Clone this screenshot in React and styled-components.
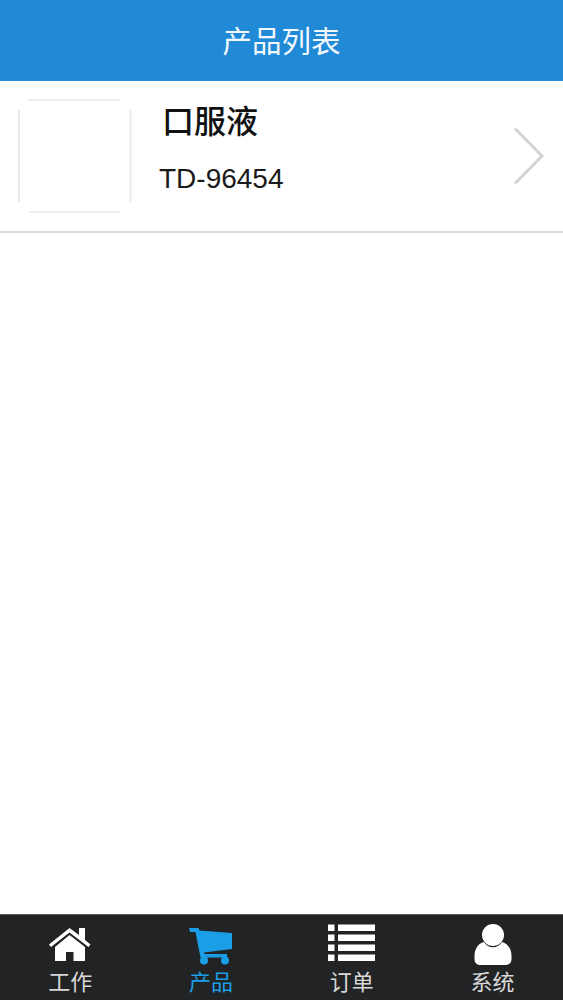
import React from 'react';
import styled, { createGlobalStyle } from 'styled-components';

const CJK = `"Liberation Sans", "Noto Sans CJK SC", sans-serif`;

const GlobalStyle = createGlobalStyle`
  html, body { margin: 0; padding: 0; background: #fff; }
  * { box-sizing: border-box; }
`;

// all tab icons share a 42px tall box, top edge at y=924 of the page
const HomeIcon = () => (
  <svg width="42" height="42" viewBox="0 -4 42 42">
    <path d="M20.5 0 L30 7 V0 H36 V12 L41.5 16.5 L39.5 19 L20.5 4.5 L2 19 L0 16.5 Z" fill="currentColor" />
    <path d="M20.5 7 L36 19 V33 H24.5 V24 H17 V33 H6 V19 Z" fill="currentColor" />
  </svg>
);

const CartIcon = () => (
  <svg width="44" height="42" viewBox="0 -4 44 42">
    <path d="M0 0 H9.5 L10.5 2.5 L43 5 V21 L15 24.5 L15.5 26 H38 V29.5 H11.5 L6.5 4 H1 Z" fill="currentColor" />
    <circle cx="15" cy="32.5" r="4" fill="currentColor" />
    <circle cx="36" cy="32.5" r="4" fill="currentColor" />
  </svg>
);

const ListIcon = () => (
  <svg width="47" height="42" viewBox="0 0 47 42">
    {[0, 10, 20, 30].map((y) => (
      <g key={y} fill="currentColor">
        <rect x="0" y={y + 0.5} width="6.5" height="6.5" />
        <rect x="10" y={y + 0.5} width="37" height="6.5" />
      </g>
    ))}
  </svg>
);

const UserIcon = () => (
  <svg width="38" height="42" viewBox="0 0 38 42">
    <circle cx="19" cy="11" r="11" fill="currentColor" />
    <path d="M10 18 C14 25 24 25 28 18 C34 19.5 37.5 25 37.5 32 V35 C37.5 39 35 41 31 41 H7 C3 41 0.5 39 0.5 35 V32 C0.5 25 4 19.5 10 18 Z" fill="currentColor" />
  </svg>
);

const ThumbFrame = () => (
  <svg width="114" height="114" viewBox="0 0 114 114">
    <g stroke="#e6e6e6" strokeWidth="1.6">
      <line x1="10" y1="1" x2="102" y2="1" />
      <line x1="11" y1="113" x2="102" y2="113" />
      <line x1="1" y1="11" x2="1" y2="103" />
      <line x1="112.5" y1="11" x2="112.5" y2="103" />
    </g>
  </svg>
);

const Chevron = () => (
  <svg width="32" height="58" viewBox="0 0 32 58">
    <path d="M2 1.5 L29 29 L2 56.5" fill="none" stroke="#d4d4d4" strokeWidth="3" />
  </svg>
);

const Page = styled.div`
  width: 563px;
  height: 1000px;
  display: flex;
  flex-direction: column;
  background: #fff;
  font-family: ${CJK};
  overflow: hidden;
`;

const Header = styled.header`
  height: 81px;
  flex: none;
  display: flex;
  align-items: center;
  justify-content: center;
  padding-bottom: 3px;
  background: #208ad6;
  color: #f2f8fd;
  font-size: 29.5px;
`;

const Content = styled.main`
  flex: 1;
`;

const ProductRow = styled.div`
  height: 152px;
  display: flex;
  align-items: center;
  padding: 0 18px;
  border-bottom: 2px solid #d9d9d9;
`;

const Thumb = styled.div`
  width: 114px;
  height: 114px;
  flex: none;
  display: flex;
`;

const Info = styled.div`
  flex: 1;
  display: flex;
  flex-direction: column;
  padding: 0 0 15px 27px;
`;

const Name = styled.div`
  font-size: 32px;
  font-weight: 500;
  line-height: 40px;
  color: #111;
  padding-left: 3px;
`;

const Code = styled.div`
  margin-top: 21px;
  font-size: 28px;
  line-height: 32px;
  color: #1a1a1a;
`;

const ChevronSlot = styled.div`
  flex: none;
  display: flex;
`;

const TabBar = styled.nav`
  height: 86px;
  flex: none;
  display: grid;
  grid-template-columns: repeat(4, 1fr);
  background: #222324;
  border-top: 1px solid #5a5a5a;
`;

const Tab = styled.div`
  display: flex;
  flex-direction: column;
  align-items: center;
  color: ${(props) => (props.$active ? '#1a9fe6' : '#fff')};
`;

const TabIcon = styled.div`
  height: 52px;
  display: flex;
  padding-top: 9px;
`;

const TabLabel = styled.div`
  font-size: 22px;
  line-height: 32px;
  color: ${(props) => (props.$active ? '#1a9fe6' : '#d8d8d8')};
`;

const tabs = [
  { label: '工作', icon: <HomeIcon /> },
  { label: '产品', icon: <CartIcon />, active: true },
  { label: '订单', icon: <ListIcon /> },
  { label: '系统', icon: <UserIcon /> },
];

export default function App() {
  return (
    <Page>
      <GlobalStyle />
      <Header>产品列表</Header>
      <Content>
        <ProductRow>
          <Thumb><ThumbFrame /></Thumb>
          <Info>
            <Name>口服液</Name>
            <Code>TD-96454</Code>
          </Info>
          <ChevronSlot><Chevron /></ChevronSlot>
        </ProductRow>
      </Content>
      <TabBar>
        {tabs.map((tab) => (
          <Tab key={tab.label} $active={tab.active}>
            <TabIcon>{tab.icon}</TabIcon>
            <TabLabel $active={tab.active}>{tab.label}</TabLabel>
          </Tab>
        ))}
      </TabBar>
    </Page>
  );
}
